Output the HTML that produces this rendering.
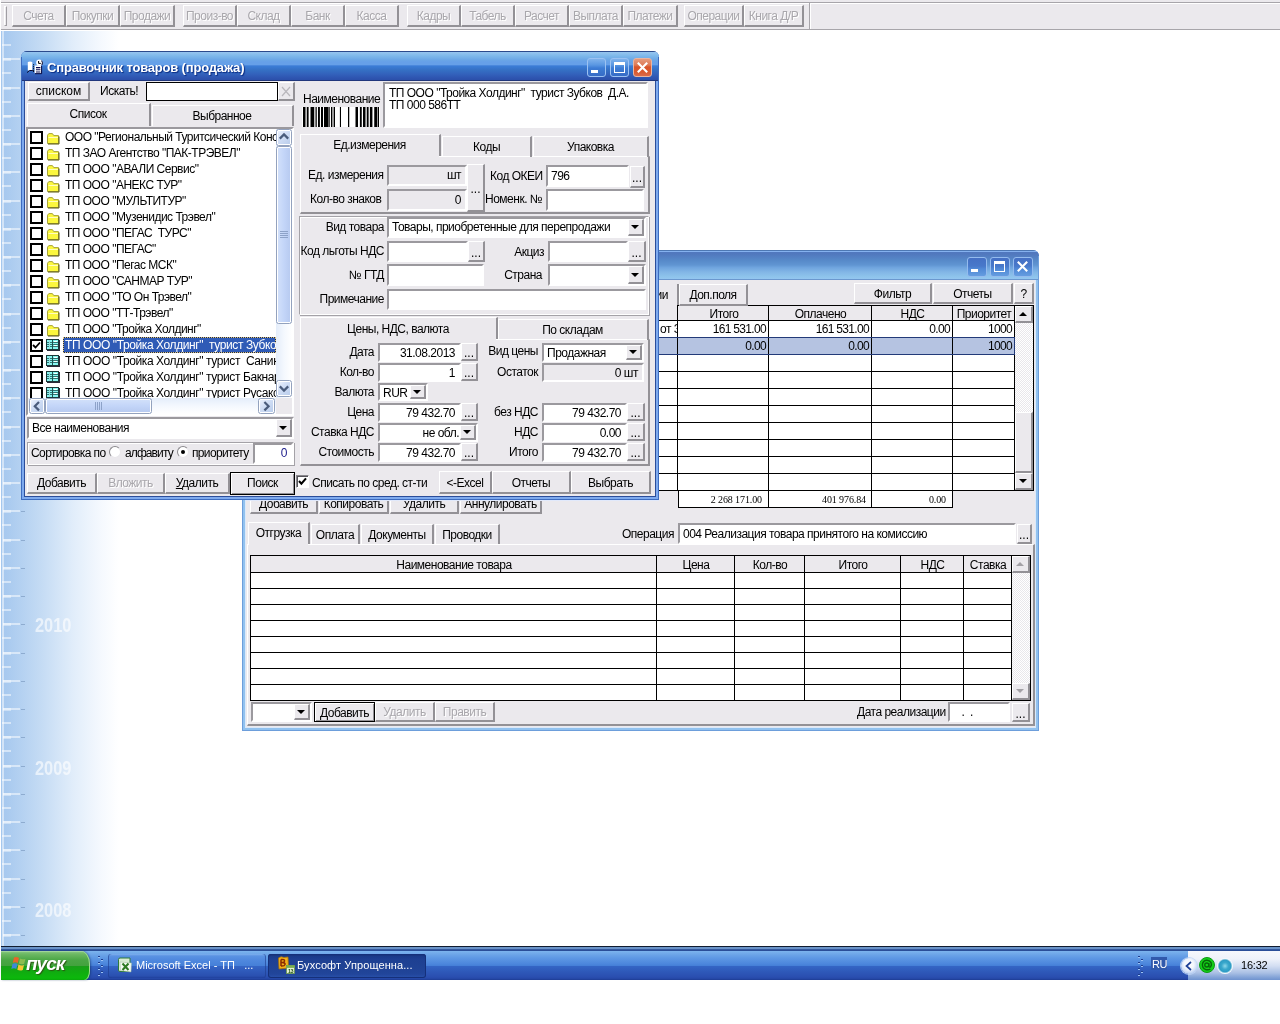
<!DOCTYPE html><html><head><meta charset="utf-8"><title>Бухсофт</title><style>
*{box-sizing:border-box;margin:0;padding:0}
html,body{width:1280px;height:1024px;overflow:hidden;background:#fff}
body{position:relative;will-change:transform;font-family:"Liberation Sans",sans-serif;font-size:12px;letter-spacing:-0.5px;color:#000;line-height:14px}
.a{position:absolute}
.t{position:absolute;white-space:pre;line-height:14px;height:14px}
.r{text-align:right}
.c{text-align:center}
.btn{position:absolute;background:#ebe9ed;border-style:solid;border-width:1px 2px 2px 1px;border-color:#fff #939196 #939196 #fff;text-align:center;white-space:pre}
.fld{position:absolute;background:#fff;border-style:solid;border-width:2px 2px 2px 2px;border-color:#9b999e #fff #fff #9b999e;white-space:pre;overflow:hidden}
.dis{background:#ebe9ed}
.grp{position:absolute;border-style:solid;border-width:1px;border-color:#a4a2a7 #fff #fff #a4a2a7;box-shadow:inset 1px 1px 0 #fff, 1px 1px 0 #a4a2a7}
.gray{color:#a9a7ac;text-shadow:1px 1px 0 #fff}
.n{letter-spacing:-0.68px}
.arrow{position:absolute;width:0;height:0;border-left:4px solid transparent;border-right:4px solid transparent;border-top:4px solid #000}
.hl{position:absolute;background:#000}
</style></head><body>
<div class="a" style="left:1px;top:31px;width:118px;height:915px;background:linear-gradient(to right,#a4c7ee 0,#a9caef 6px,#c4dbf4 40px,#e1edfa 72px,#f5f9fe 100px,#fff 118px)"></div>
<div class="a" style="left:2px;top:31px;width:2px;height:915px;background:rgba(255,255,255,.5)"></div>
<div class="a" style="left:3px;top:58px;width:8px;height:3px;background:rgba(255,255,255,.4)"></div>
<div class="a" style="left:3px;top:58px;width:17px;height:2px;background:rgba(255,255,255,.5)"></div>
<div class="a" style="left:21px;top:59px;width:4px;height:1px;background:rgba(110,140,180,.55)"></div>
<div class="a" style="left:3px;top:87px;width:8px;height:3px;background:rgba(255,255,255,.4)"></div>
<div class="a" style="left:3px;top:87px;width:17px;height:2px;background:rgba(255,255,255,.5)"></div>
<div class="a" style="left:21px;top:88px;width:4px;height:1px;background:rgba(110,140,180,.55)"></div>
<div class="a" style="left:3px;top:115px;width:8px;height:3px;background:rgba(255,255,255,.4)"></div>
<div class="a" style="left:3px;top:115px;width:17px;height:2px;background:rgba(255,255,255,.5)"></div>
<div class="a" style="left:21px;top:116px;width:4px;height:1px;background:rgba(110,140,180,.55)"></div>
<div class="a" style="left:3px;top:143px;width:8px;height:3px;background:rgba(255,255,255,.4)"></div>
<div class="a" style="left:3px;top:143px;width:17px;height:2px;background:rgba(255,255,255,.5)"></div>
<div class="a" style="left:21px;top:144px;width:4px;height:1px;background:rgba(110,140,180,.55)"></div>
<div class="a" style="left:3px;top:171px;width:8px;height:3px;background:rgba(255,255,255,.4)"></div>
<div class="a" style="left:3px;top:171px;width:17px;height:2px;background:rgba(255,255,255,.5)"></div>
<div class="a" style="left:21px;top:172px;width:4px;height:1px;background:rgba(110,140,180,.55)"></div>
<div class="a" style="left:3px;top:200px;width:8px;height:3px;background:rgba(255,255,255,.4)"></div>
<div class="a" style="left:3px;top:200px;width:17px;height:2px;background:rgba(255,255,255,.5)"></div>
<div class="a" style="left:21px;top:201px;width:4px;height:1px;background:rgba(110,140,180,.55)"></div>
<div class="a" style="left:3px;top:228px;width:8px;height:3px;background:rgba(255,255,255,.4)"></div>
<div class="a" style="left:3px;top:228px;width:17px;height:2px;background:rgba(255,255,255,.5)"></div>
<div class="a" style="left:21px;top:229px;width:4px;height:1px;background:rgba(110,140,180,.55)"></div>
<div class="a" style="left:3px;top:256px;width:8px;height:3px;background:rgba(255,255,255,.4)"></div>
<div class="a" style="left:3px;top:256px;width:17px;height:2px;background:rgba(255,255,255,.5)"></div>
<div class="a" style="left:21px;top:257px;width:4px;height:1px;background:rgba(110,140,180,.55)"></div>
<div class="a" style="left:3px;top:284px;width:8px;height:3px;background:rgba(255,255,255,.4)"></div>
<div class="a" style="left:3px;top:284px;width:17px;height:2px;background:rgba(255,255,255,.5)"></div>
<div class="a" style="left:21px;top:285px;width:4px;height:1px;background:rgba(110,140,180,.55)"></div>
<div class="a" style="left:3px;top:313px;width:8px;height:3px;background:rgba(255,255,255,.4)"></div>
<div class="a" style="left:3px;top:313px;width:17px;height:2px;background:rgba(255,255,255,.5)"></div>
<div class="a" style="left:21px;top:314px;width:4px;height:1px;background:rgba(110,140,180,.55)"></div>
<div class="a" style="left:3px;top:341px;width:8px;height:3px;background:rgba(255,255,255,.4)"></div>
<div class="a" style="left:3px;top:341px;width:17px;height:2px;background:rgba(255,255,255,.5)"></div>
<div class="a" style="left:21px;top:342px;width:4px;height:1px;background:rgba(110,140,180,.55)"></div>
<div class="a" style="left:3px;top:369px;width:8px;height:3px;background:rgba(255,255,255,.4)"></div>
<div class="a" style="left:3px;top:369px;width:17px;height:2px;background:rgba(255,255,255,.5)"></div>
<div class="a" style="left:21px;top:370px;width:4px;height:1px;background:rgba(110,140,180,.55)"></div>
<div class="a" style="left:3px;top:397px;width:8px;height:3px;background:rgba(255,255,255,.4)"></div>
<div class="a" style="left:3px;top:397px;width:17px;height:2px;background:rgba(255,255,255,.5)"></div>
<div class="a" style="left:21px;top:398px;width:4px;height:1px;background:rgba(110,140,180,.55)"></div>
<div class="a" style="left:3px;top:426px;width:8px;height:3px;background:rgba(255,255,255,.4)"></div>
<div class="a" style="left:3px;top:426px;width:17px;height:2px;background:rgba(255,255,255,.5)"></div>
<div class="a" style="left:21px;top:427px;width:4px;height:1px;background:rgba(110,140,180,.55)"></div>
<div class="a" style="left:3px;top:454px;width:8px;height:3px;background:rgba(255,255,255,.4)"></div>
<div class="a" style="left:3px;top:454px;width:17px;height:2px;background:rgba(255,255,255,.5)"></div>
<div class="a" style="left:21px;top:455px;width:4px;height:1px;background:rgba(110,140,180,.55)"></div>
<div class="a" style="left:3px;top:482px;width:8px;height:3px;background:rgba(255,255,255,.4)"></div>
<div class="a" style="left:3px;top:482px;width:17px;height:2px;background:rgba(255,255,255,.5)"></div>
<div class="a" style="left:21px;top:483px;width:4px;height:1px;background:rgba(110,140,180,.55)"></div>
<div class="a" style="left:3px;top:510px;width:8px;height:3px;background:rgba(255,255,255,.4)"></div>
<div class="a" style="left:3px;top:510px;width:17px;height:2px;background:rgba(255,255,255,.5)"></div>
<div class="a" style="left:21px;top:511px;width:4px;height:1px;background:rgba(110,140,180,.55)"></div>
<div class="a" style="left:3px;top:539px;width:8px;height:3px;background:rgba(255,255,255,.4)"></div>
<div class="a" style="left:3px;top:539px;width:17px;height:2px;background:rgba(255,255,255,.5)"></div>
<div class="a" style="left:21px;top:540px;width:4px;height:1px;background:rgba(110,140,180,.55)"></div>
<div class="a" style="left:3px;top:567px;width:8px;height:3px;background:rgba(255,255,255,.4)"></div>
<div class="a" style="left:3px;top:567px;width:17px;height:2px;background:rgba(255,255,255,.5)"></div>
<div class="a" style="left:21px;top:568px;width:4px;height:1px;background:rgba(110,140,180,.55)"></div>
<div class="a" style="left:3px;top:595px;width:8px;height:3px;background:rgba(255,255,255,.4)"></div>
<div class="a" style="left:3px;top:595px;width:17px;height:2px;background:rgba(255,255,255,.5)"></div>
<div class="a" style="left:21px;top:596px;width:4px;height:1px;background:rgba(110,140,180,.55)"></div>
<div class="a" style="left:3px;top:623px;width:8px;height:3px;background:rgba(255,255,255,.4)"></div>
<div class="a" style="left:3px;top:623px;width:17px;height:2px;background:rgba(255,255,255,.5)"></div>
<div class="a" style="left:21px;top:624px;width:4px;height:1px;background:rgba(110,140,180,.55)"></div>
<div class="a" style="left:3px;top:652px;width:8px;height:3px;background:rgba(255,255,255,.4)"></div>
<div class="a" style="left:3px;top:652px;width:17px;height:2px;background:rgba(255,255,255,.5)"></div>
<div class="a" style="left:21px;top:653px;width:4px;height:1px;background:rgba(110,140,180,.55)"></div>
<div class="a" style="left:3px;top:680px;width:8px;height:3px;background:rgba(255,255,255,.4)"></div>
<div class="a" style="left:3px;top:680px;width:17px;height:2px;background:rgba(255,255,255,.5)"></div>
<div class="a" style="left:21px;top:681px;width:4px;height:1px;background:rgba(110,140,180,.55)"></div>
<div class="a" style="left:3px;top:708px;width:8px;height:3px;background:rgba(255,255,255,.4)"></div>
<div class="a" style="left:3px;top:708px;width:17px;height:2px;background:rgba(255,255,255,.5)"></div>
<div class="a" style="left:21px;top:709px;width:4px;height:1px;background:rgba(110,140,180,.55)"></div>
<div class="a" style="left:3px;top:736px;width:8px;height:3px;background:rgba(255,255,255,.4)"></div>
<div class="a" style="left:3px;top:736px;width:17px;height:2px;background:rgba(255,255,255,.5)"></div>
<div class="a" style="left:21px;top:737px;width:4px;height:1px;background:rgba(110,140,180,.55)"></div>
<div class="a" style="left:3px;top:765px;width:8px;height:3px;background:rgba(255,255,255,.4)"></div>
<div class="a" style="left:3px;top:765px;width:17px;height:2px;background:rgba(255,255,255,.5)"></div>
<div class="a" style="left:21px;top:766px;width:4px;height:1px;background:rgba(110,140,180,.55)"></div>
<div class="a" style="left:3px;top:793px;width:8px;height:3px;background:rgba(255,255,255,.4)"></div>
<div class="a" style="left:3px;top:793px;width:17px;height:2px;background:rgba(255,255,255,.5)"></div>
<div class="a" style="left:21px;top:794px;width:4px;height:1px;background:rgba(110,140,180,.55)"></div>
<div class="a" style="left:3px;top:821px;width:8px;height:3px;background:rgba(255,255,255,.4)"></div>
<div class="a" style="left:3px;top:821px;width:17px;height:2px;background:rgba(255,255,255,.5)"></div>
<div class="a" style="left:21px;top:822px;width:4px;height:1px;background:rgba(110,140,180,.55)"></div>
<div class="a" style="left:3px;top:849px;width:8px;height:3px;background:rgba(255,255,255,.4)"></div>
<div class="a" style="left:3px;top:849px;width:17px;height:2px;background:rgba(255,255,255,.5)"></div>
<div class="a" style="left:21px;top:850px;width:4px;height:1px;background:rgba(110,140,180,.55)"></div>
<div class="a" style="left:3px;top:878px;width:8px;height:3px;background:rgba(255,255,255,.4)"></div>
<div class="a" style="left:3px;top:878px;width:17px;height:2px;background:rgba(255,255,255,.5)"></div>
<div class="a" style="left:21px;top:879px;width:4px;height:1px;background:rgba(110,140,180,.55)"></div>
<div class="a" style="left:3px;top:906px;width:8px;height:3px;background:rgba(255,255,255,.4)"></div>
<div class="a" style="left:3px;top:906px;width:17px;height:2px;background:rgba(255,255,255,.5)"></div>
<div class="a" style="left:21px;top:907px;width:4px;height:1px;background:rgba(110,140,180,.55)"></div>
<div class="a" style="left:3px;top:934px;width:8px;height:3px;background:rgba(255,255,255,.4)"></div>
<div class="a" style="left:3px;top:934px;width:17px;height:2px;background:rgba(255,255,255,.5)"></div>
<div class="a" style="left:21px;top:935px;width:4px;height:1px;background:rgba(110,140,180,.55)"></div>
<div class="a" style="left:2px;top:44px;width:9px;height:2px;background:rgba(255,255,255,.5)"></div>
<div class="a" style="left:2px;top:72px;width:9px;height:2px;background:rgba(255,255,255,.5)"></div>
<div class="a" style="left:2px;top:101px;width:9px;height:2px;background:rgba(255,255,255,.5)"></div>
<div class="a" style="left:2px;top:129px;width:9px;height:2px;background:rgba(255,255,255,.5)"></div>
<div class="a" style="left:2px;top:157px;width:9px;height:2px;background:rgba(255,255,255,.5)"></div>
<div class="a" style="left:2px;top:185px;width:9px;height:2px;background:rgba(255,255,255,.5)"></div>
<div class="a" style="left:2px;top:214px;width:9px;height:2px;background:rgba(255,255,255,.5)"></div>
<div class="a" style="left:2px;top:242px;width:9px;height:2px;background:rgba(255,255,255,.5)"></div>
<div class="a" style="left:2px;top:270px;width:9px;height:2px;background:rgba(255,255,255,.5)"></div>
<div class="a" style="left:2px;top:298px;width:9px;height:2px;background:rgba(255,255,255,.5)"></div>
<div class="a" style="left:2px;top:327px;width:9px;height:2px;background:rgba(255,255,255,.5)"></div>
<div class="a" style="left:2px;top:355px;width:9px;height:2px;background:rgba(255,255,255,.5)"></div>
<div class="a" style="left:2px;top:383px;width:9px;height:2px;background:rgba(255,255,255,.5)"></div>
<div class="a" style="left:2px;top:411px;width:9px;height:2px;background:rgba(255,255,255,.5)"></div>
<div class="a" style="left:2px;top:440px;width:9px;height:2px;background:rgba(255,255,255,.5)"></div>
<div class="a" style="left:2px;top:468px;width:9px;height:2px;background:rgba(255,255,255,.5)"></div>
<div class="a" style="left:2px;top:496px;width:9px;height:2px;background:rgba(255,255,255,.5)"></div>
<div class="a" style="left:2px;top:524px;width:9px;height:2px;background:rgba(255,255,255,.5)"></div>
<div class="a" style="left:2px;top:553px;width:9px;height:2px;background:rgba(255,255,255,.5)"></div>
<div class="a" style="left:2px;top:581px;width:9px;height:2px;background:rgba(255,255,255,.5)"></div>
<div class="a" style="left:2px;top:609px;width:9px;height:2px;background:rgba(255,255,255,.5)"></div>
<div class="a" style="left:2px;top:637px;width:9px;height:2px;background:rgba(255,255,255,.5)"></div>
<div class="a" style="left:2px;top:666px;width:9px;height:2px;background:rgba(255,255,255,.5)"></div>
<div class="a" style="left:2px;top:694px;width:9px;height:2px;background:rgba(255,255,255,.5)"></div>
<div class="a" style="left:2px;top:722px;width:9px;height:2px;background:rgba(255,255,255,.5)"></div>
<div class="a" style="left:2px;top:750px;width:9px;height:2px;background:rgba(255,255,255,.5)"></div>
<div class="a" style="left:2px;top:779px;width:9px;height:2px;background:rgba(255,255,255,.5)"></div>
<div class="a" style="left:2px;top:807px;width:9px;height:2px;background:rgba(255,255,255,.5)"></div>
<div class="a" style="left:2px;top:835px;width:9px;height:2px;background:rgba(255,255,255,.5)"></div>
<div class="a" style="left:2px;top:863px;width:9px;height:2px;background:rgba(255,255,255,.5)"></div>
<div class="a" style="left:2px;top:892px;width:9px;height:2px;background:rgba(255,255,255,.5)"></div>
<div class="a" style="left:2px;top:920px;width:9px;height:2px;background:rgba(255,255,255,.5)"></div>
<div class="a" style="left:35px;top:613px;width:48px;height:24px;line-height:24px;font-size:21px;font-weight:bold;letter-spacing:0;color:rgba(255,255,255,.62);transform:scaleX(.78);transform-origin:0 50%">2010</div>
<div class="a" style="left:35px;top:756px;width:48px;height:24px;line-height:24px;font-size:21px;font-weight:bold;letter-spacing:0;color:rgba(255,255,255,.62);transform:scaleX(.78);transform-origin:0 50%">2009</div>
<div class="a" style="left:35px;top:898px;width:48px;height:24px;line-height:24px;font-size:21px;font-weight:bold;letter-spacing:0;color:rgba(255,255,255,.62);transform:scaleX(.78);transform-origin:0 50%">2008</div>
<div class="a" style="left:1px;top:0;width:1279px;height:31px;background:#ebe9ed"></div>
<div class="a" style="left:1px;top:2px;width:1279px;height:1px;background:#a7a5aa"></div>
<div class="a" style="left:1px;top:3px;width:1279px;height:1px;background:#fff"></div>
<div class="a" style="left:1px;top:29px;width:1279px;height:1px;background:#a7a5aa"></div>
<div class="a" style="left:1px;top:30px;width:1279px;height:1px;background:#fff"></div>
<div class="a" style="left:809px;top:3px;width:1px;height:26px;background:#a7a5aa"></div>
<div class="a" style="left:810px;top:3px;width:1px;height:26px;background:#fff"></div>
<div class="a" style="left:4px;top:6px;width:3px;height:20px;border-style:solid;border-width:1px;border-color:#fff #a09ea3 #a09ea3 #fff"></div>
<div class="btn gray" style="left:12px;top:5px;width:54px;height:22px;line-height:21px">Счета</div>
<div class="btn gray" style="left:66px;top:5px;width:54px;height:22px;line-height:21px">Покупки</div>
<div class="btn gray" style="left:120px;top:5px;width:55px;height:22px;line-height:21px">Продажи</div>
<div class="btn gray" style="left:183px;top:5px;width:54px;height:22px;line-height:21px">Произ-во</div>
<div class="btn gray" style="left:237px;top:5px;width:54px;height:22px;line-height:21px">Склад</div>
<div class="btn gray" style="left:291px;top:5px;width:54px;height:22px;line-height:21px">Банк</div>
<div class="btn gray" style="left:345px;top:5px;width:54px;height:22px;line-height:21px">Касса</div>
<div class="btn gray" style="left:407px;top:5px;width:54px;height:22px;line-height:21px">Кадры</div>
<div class="btn gray" style="left:461px;top:5px;width:54px;height:22px;line-height:21px">Табель</div>
<div class="btn gray" style="left:515px;top:5px;width:54px;height:22px;line-height:21px">Расчет</div>
<div class="btn gray" style="left:569px;top:5px;width:54px;height:22px;line-height:21px">Выплата</div>
<div class="btn gray" style="left:623px;top:5px;width:55px;height:22px;line-height:21px">Платежи</div>
<div class="btn gray" style="left:684px;top:5px;width:60px;height:22px;line-height:21px">Операции</div>
<div class="btn gray" style="left:744px;top:5px;width:60px;height:22px;line-height:21px">Книга Д/Р</div>
<div class="a" style="left:242px;top:250px;width:797px;height:481px;background:#6d9edb;border-radius:6px 6px 0 0"></div>
<div class="a" style="left:243px;top:251px;width:795px;height:479px;background:#92c2ef;border-radius:5px 5px 0 0"></div>
<div class="a" style="left:245px;top:253px;width:791px;height:475px;background:#dbe9fa"></div>
<div class="a" style="left:242px;top:250px;width:797px;height:30px;background:linear-gradient(#4d78b4 0,#4d78b4 1px,#85b1ef 1px,#85b1ef 2px,#5178be 2px,#5178be 4px,#5688c8 10px,#6095d2 15px,#6fa4de 17.5px,#82b6e6 22px,#8fc5ec 27px,#94c6f1 29px,#6b98cf 29px,#6b98cf 30px);border-radius:6px 6px 0 0"></div>
<div class="a" style="left:242px;top:256px;width:1px;height:24px;background:#6d9edb"></div><div class="a" style="left:1038px;top:256px;width:1px;height:24px;background:#6d9edb"></div>
<div class="a" style="left:246px;top:280px;width:789px;height:447px;background:#ebe9ed"></div>
<div class="a" style="left:967px;top:257px;width:20px;height:20px;border:1px solid #94bbee;border-radius:3px;background:linear-gradient(#4570c4 0,#4878ca 8px,#5189d6 11px,#6aa2e2 20px)"></div>
<div class="a" style="left:971px;top:269px;width:7px;height:3px;background:#fff"></div>
<div class="a" style="left:990px;top:257px;width:20px;height:20px;border:1px solid #94bbee;border-radius:3px;background:linear-gradient(#4570c4 0,#4878ca 8px,#5189d6 11px,#6aa2e2 20px)"></div>
<div class="a" style="left:994px;top:261px;width:11px;height:11px;border:1px solid #fff;border-top-width:3px"></div>
<div class="a" style="left:1013px;top:257px;width:20px;height:20px;border:1px solid #94bbee;border-radius:3px;background:linear-gradient(#4570c4 0,#4878ca 8px,#5189d6 11px,#6aa2e2 20px)"></div>
<svg class="a" style="left:1016px;top:260px" width="13" height="13" viewBox="0 0 13 13"><path d="M1.8 1.8 L11.2 11.2 M11.2 1.8 L1.8 11.2" stroke="#fff" stroke-width="2.1" fill="none"/></svg>
<div class="btn " style="left:854px;top:283px;width:78px;height:21px;line-height:18px;line-height:20px">Фильтр</div>
<div class="btn " style="left:933px;top:283px;width:80px;height:21px;line-height:18px;line-height:20px">Отчеты</div>
<div class="btn " style="left:1014px;top:283px;width:20px;height:21px;line-height:18px;line-height:20px">?</div>
<div class="a" style="left:247px;top:305px;width:787px;height:186px;background:#fff"></div>
<div class="a" style="left:247px;top:305px;width:787px;height:16px;background:#ebe9ed"></div>
<div class="a" style="left:247px;top:338px;width:767px;height:17px;background:#b5c3e1"></div>
<div class="hl" style="left:677px;top:305px;width:357px;height:1px"></div>
<div class="hl" style="left:247px;top:320px;width:768px;height:1px"></div>
<div class="hl" style="left:247px;top:337px;width:768px;height:1px"></div>
<div class="hl" style="left:247px;top:354px;width:768px;height:1px"></div>
<div class="hl" style="left:247px;top:371px;width:768px;height:1px"></div>
<div class="hl" style="left:247px;top:388px;width:768px;height:1px"></div>
<div class="hl" style="left:247px;top:405px;width:768px;height:1px"></div>
<div class="hl" style="left:247px;top:422px;width:768px;height:1px"></div>
<div class="hl" style="left:247px;top:439px;width:768px;height:1px"></div>
<div class="hl" style="left:247px;top:456px;width:768px;height:1px"></div>
<div class="hl" style="left:247px;top:473px;width:768px;height:1px"></div>
<div class="hl" style="left:247px;top:490px;width:787px;height:1px"></div>
<div class="hl" style="left:677px;top:305px;width:1px;height:186px"></div>
<div class="hl" style="left:768px;top:305px;width:1px;height:186px"></div>
<div class="hl" style="left:871px;top:305px;width:1px;height:186px"></div>
<div class="hl" style="left:952px;top:305px;width:1px;height:186px"></div>
<div class="hl" style="left:1014px;top:305px;width:1px;height:186px"></div>
<div class="hl" style="left:1033px;top:305px;width:1px;height:186px"></div>
<div class="a" style="left:659px;top:337px;width:356px;height:18px;border:1px solid #223a78;border-left:none"></div>
<div class="hl" style="left:677px;top:338px;width:1px;height:16px"></div>
<div class="hl" style="left:768px;top:338px;width:1px;height:16px"></div>
<div class="hl" style="left:871px;top:338px;width:1px;height:16px"></div>
<div class="hl" style="left:952px;top:338px;width:1px;height:16px"></div>
<div class="t c" style="left:679px;top:307px;width:90px;">Итого</div>
<div class="t c" style="left:769px;top:307px;width:103px;">Оплачено</div>
<div class="t c" style="left:872px;top:307px;width:81px;">НДС</div>
<div class="t c" style="left:953px;top:307px;width:62px;">Приоритет</div>
<div class="a" style="left:659px;top:322px;width:18px;height:15px;overflow:hidden"><div class="t" style="left:1px;top:0">от З</div></div>
<div class="t r" style="left:566px;width:200px;top:322px;letter-spacing:-0.68px;">161 531.00</div>
<div class="t r" style="left:669px;width:200px;top:322px;letter-spacing:-0.68px;">161 531.00</div>
<div class="t r" style="left:750px;width:200px;top:322px;letter-spacing:-0.68px;">0.00</div>
<div class="t r" style="left:812px;width:200px;top:322px;letter-spacing:-0.68px;">1000</div>
<div class="t r" style="left:566px;width:200px;top:339px;letter-spacing:-0.68px;">0.00</div>
<div class="t r" style="left:669px;width:200px;top:339px;letter-spacing:-0.68px;">0.00</div>
<div class="t r" style="left:812px;width:200px;top:339px;letter-spacing:-0.68px;">1000</div>
<div class="a" style="left:678px;top:490px;width:275px;height:18px;background:#fff;border:1px solid #000"></div>
<div class="hl" style="left:768px;top:490px;width:1px;height:18px"></div>
<div class="hl" style="left:871px;top:490px;width:1px;height:18px"></div>
<div class="t r" style="left:562px;width:200px;top:493px;font-family:'Liberation Serif',serif;font-size:10px;letter-spacing:-.1px;">2 268 171.00</div>
<div class="t r" style="left:666px;width:200px;top:493px;font-family:'Liberation Serif',serif;font-size:10px;letter-spacing:-.1px;">401 976.84</div>
<div class="t r" style="left:746px;width:200px;top:493px;font-family:'Liberation Serif',serif;font-size:10px;letter-spacing:-.1px;">0.00</div>
<div class="a" style="left:1015px;top:306px;width:18px;height:184px;background:repeating-conic-gradient(#fff 0 25%,#e9e7eb 0 50%) 0 0/2px 2px"></div>
<div class="btn " style="left:1015px;top:306px;width:18px;height:17px;line-height:14px;"></div>
<div class="arrow" style="left:1019px;top:312px;border-top:none;border-bottom:4px solid #000"></div>
<div class="btn " style="left:1015px;top:473px;width:18px;height:17px;line-height:14px;"></div>
<div class="arrow" style="left:1019px;top:479px;border-top-color:#000"></div>
<div class="btn " style="left:1015px;top:412px;width:18px;height:61px;line-height:58px;"></div>
<div class="btn " style="left:679px;top:284px;width:69px;height:22px;line-height:19px;line-height:21px">Доп.поля</div>
<div class="a" style="left:677px;top:284px;width:2px;height:21px;background:#939196"></div>
<div class="t r" style="left:468px;width:200px;top:288px;">ии</div>
<div class="btn " style="left:250px;top:495px;width:68px;height:19px;line-height:16px;">Добавить</div>
<div class="btn " style="left:319px;top:495px;width:70px;height:19px;line-height:16px;">Копировать</div>
<div class="btn " style="left:390px;top:495px;width:69px;height:19px;line-height:16px;">Удалить</div>
<div class="btn " style="left:460px;top:495px;width:82px;height:19px;line-height:16px;">Аннулировать</div>
<div class="btn" style="left:247px;top:544px;width:788px;height:182px"></div>
<div class="a" style="left:248px;top:522px;width:62px;height:22px;background:#ebe9ed;border-style:solid;border-width:1px 2px 0 1px;border-color:#fff #939196 #fff #fff"></div>
<div class="a" style="left:249px;top:544px;width:59px;height:1px;background:#ebe9ed"></div>
<div class="t c" style="left:248px;top:526px;width:61px;">Отгрузка</div>
<div class="a" style="left:311px;top:524px;width:49px;height:20px;border-style:solid;border-width:1px 2px 0 1px;border-color:#fff #939196 #fff #fff"></div>
<div class="t c" style="left:311px;top:528px;width:48px;">Оплата</div>
<div class="a" style="left:361px;top:524px;width:73px;height:20px;border-style:solid;border-width:1px 2px 0 1px;border-color:#fff #939196 #fff #fff"></div>
<div class="t c" style="left:361px;top:528px;width:72px;">Документы</div>
<div class="a" style="left:435px;top:524px;width:65px;height:20px;border-style:solid;border-width:1px 2px 0 1px;border-color:#fff #939196 #fff #fff"></div>
<div class="t c" style="left:435px;top:528px;width:64px;">Проводки</div>
<div class="t" style="left:622px;top:527px;">Операция</div>
<div class="fld " style="left:678px;top:523px;width:338px;height:21px;line-height:17px;padding:0 4px 0 3px;line-height:19px;">004 Реализация товара принятого на комиссию</div>
<div class="btn " style="left:1017px;top:524px;width:15px;height:20px;line-height:17px;letter-spacing:0;padding-top:2px;overflow:hidden;">...</div>
<div class="a" style="left:250px;top:555px;width:781px;height:146px;background:#fff"></div>
<div class="a" style="left:250px;top:555px;width:781px;height:17px;background:#ebe9ed"></div>
<div class="hl" style="left:250px;top:555px;width:781px;height:1px"></div>
<div class="hl" style="left:250px;top:572px;width:762px;height:1px"></div>
<div class="hl" style="left:250px;top:588px;width:762px;height:1px"></div>
<div class="hl" style="left:250px;top:604px;width:762px;height:1px"></div>
<div class="hl" style="left:250px;top:620px;width:762px;height:1px"></div>
<div class="hl" style="left:250px;top:636px;width:762px;height:1px"></div>
<div class="hl" style="left:250px;top:652px;width:762px;height:1px"></div>
<div class="hl" style="left:250px;top:668px;width:762px;height:1px"></div>
<div class="hl" style="left:250px;top:684px;width:762px;height:1px"></div>
<div class="hl" style="left:250px;top:700px;width:781px;height:1px"></div>
<div class="hl" style="left:250px;top:555px;width:1px;height:146px"></div>
<div class="hl" style="left:656px;top:555px;width:1px;height:146px"></div>
<div class="hl" style="left:734px;top:555px;width:1px;height:146px"></div>
<div class="hl" style="left:804px;top:555px;width:1px;height:146px"></div>
<div class="hl" style="left:900px;top:555px;width:1px;height:146px"></div>
<div class="hl" style="left:963px;top:555px;width:1px;height:146px"></div>
<div class="hl" style="left:1011px;top:555px;width:1px;height:146px"></div>
<div class="hl" style="left:1030px;top:555px;width:1px;height:146px"></div>
<div class="t c" style="left:251px;top:558px;width:406px;">Наименование товара</div>
<div class="t c" style="left:657px;top:558px;width:78px;">Цена</div>
<div class="t c" style="left:735px;top:558px;width:70px;">Кол-во</div>
<div class="t c" style="left:805px;top:558px;width:96px;">Итого</div>
<div class="t c" style="left:901px;top:558px;width:63px;">НДС</div>
<div class="t c" style="left:964px;top:558px;width:48px;">Ставка</div>
<div class="a" style="left:1012px;top:556px;width:18px;height:144px;background:repeating-conic-gradient(#fff 0 25%,#e9e7eb 0 50%) 0 0/2px 2px"></div>
<div class="btn " style="left:1012px;top:556px;width:18px;height:17px;line-height:14px;"></div>
<div class="arrow" style="left:1016px;top:562px;border-top:none;border-bottom:4px solid #a3a1a6"></div>
<div class="btn " style="left:1012px;top:683px;width:18px;height:17px;line-height:14px;"></div>
<div class="arrow" style="left:1016px;top:689px;border-top-color:#a3a1a6"></div>
<div class="fld " style="left:251px;top:702px;width:61px;height:20px;line-height:16px;padding:0 4px 0 3px;"></div>
<div class="btn" style="left:294px;top:704px;width:16px;height:16px"></div>
<div class="arrow" style="left:297px;top:710px"></div>
<div class="btn " style="left:314px;top:702px;width:61px;height:20px;line-height:17px;border:1px solid #000;box-shadow:inset 1px 1px 0 #fff,inset -1px -1px 0 #939196;line-height:20px">Добавить</div>
<div class="btn gray" style="left:375px;top:702px;width:60px;height:20px;line-height:17px;line-height:19px">Удалить</div>
<div class="btn gray" style="left:435px;top:702px;width:60px;height:20px;line-height:17px;line-height:19px">Править</div>
<div class="t" style="left:857px;top:705px;">Дата реализации</div>
<div class="fld " style="left:948px;top:702px;width:62px;height:20px;line-height:16px;padding:0 4px 0 3px;">   .  .</div>
<div class="btn " style="left:1012px;top:703px;width:18px;height:19px;line-height:16px;letter-spacing:0;padding-top:2px;overflow:hidden;">...</div>
<div class="a" style="left:246px;top:500px;width:413px;height:1px;background:#e1e9fb"></div>
<div class="a" style="left:21px;top:51px;width:638px;height:449px;background:#3d6cc0;border-radius:6px 6px 0 0"></div>
<div class="a" style="left:22px;top:52px;width:636px;height:447px;background:#7eaaee;border-radius:5px 5px 0 0"></div>
<div class="a" style="left:24px;top:54px;width:632px;height:443px;background:#2b4d9a"></div>
<div class="a" style="left:21px;top:51px;width:638px;height:30px;background:linear-gradient(#2b4b8c 0,#2b4b8c 1px,#97c5ef 1px,#7db8ea 5px,#6aa6e6 9px,#66a0e8 11px,#66a0e8 13.5px,#4a88dc 14.5px,#3a7bd4 15.5px,#3570c4 19px,#3362bc 23px,#2e54b0 27px,#2b50aa 29px,#21377c 29px,#21377c 30px);border-radius:6px 6px 0 0"></div>
<div class="a" style="left:21px;top:57px;width:1px;height:24px;background:#3d6cc0"></div><div class="a" style="left:658px;top:57px;width:1px;height:24px;background:#3d6cc0"></div>
<div class="a" style="left:25px;top:81px;width:630px;height:415px;background:#ebe9ed"></div>
<div class="a" style="left:587px;top:58px;width:19px;height:19px;border:1px solid #9cc2f2;border-radius:3px;background:linear-gradient(#7fb2ec 0,#5a97e2 6px,#3d7dd6 9px,#3a74cc 13px,#3467c4 19px)"></div>
<div class="a" style="left:591px;top:70px;width:7px;height:3px;background:#fff"></div>
<div class="a" style="left:610px;top:58px;width:19px;height:19px;border:1px solid #9cc2f2;border-radius:3px;background:linear-gradient(#7fb2ec 0,#5a97e2 6px,#3d7dd6 9px,#3a74cc 13px,#3467c4 19px)"></div>
<div class="a" style="left:614px;top:62px;width:11px;height:11px;border:1px solid #fff;border-top-width:3px"></div>
<div class="a" style="left:633px;top:58px;width:19px;height:19px;border:1px solid #eab4a0;border-radius:3px;background:linear-gradient(#e59a7c 0,#de7b58 6px,#d9542a 8px,#db5a30 13px,#d97258 19px)"></div>
<svg class="a" style="left:636px;top:61px" width="13" height="13" viewBox="0 0 13 13"><path d="M1.8 1.8 L11.2 11.2 M11.2 1.8 L1.8 11.2" stroke="#fff" stroke-width="2.1" fill="none"/></svg>
<svg class="a" style="left:27px;top:59px" width="17" height="16" viewBox="0 0 17 16"><path d="M.8 2.9 Q3 2.2 5.3 2.9 V11.4 H.8z" fill="#fff"/><path d="M0 13.6 L2.6 11.5 H5.6 L7 13" stroke="#0a0a30" stroke-width="1" fill="none"/><path d="M6.6 5.2v1M6.6 7.2v1M6.6 9.2v1M6.6 11.2v1" stroke="#000" stroke-width="1"/><rect x="7.6" y="6.4" width="6.6" height="7.8" fill="#fff"/><path d="M14.6 6.6V14.7H8" stroke="#0a0a40" stroke-width="1" fill="none"/><path d="M9 8.6h4.4M9 10.8h4.4M9 13h4.4" stroke="#0a0a50" stroke-width="1.1"/><circle cx="12.3" cy="3.7" r="3.1" fill="#fff"/><path d="M14.6 1.6 Q16.2 3.8 14.9 6" stroke="#0a0a30" stroke-width="1" fill="none"/><path d="M11.6 2v2.4h2.2" stroke="#000" stroke-width="1" fill="none"/></svg>
<div class="t" style="left:47px;top:59px;height:18px;line-height:18px;font-size:13px;font-weight:bold;letter-spacing:-0.18px;color:#fff;text-shadow:1px 1px 1px #0a2a80">Справочник товаров (продажа)</div>
<div class="btn " style="left:28px;top:82px;width:62px;height:19px;line-height:16px;letter-spacing:0">списком</div>
<div class="t" style="left:100px;top:84px;">Искать!</div>
<div class="a" style="left:146px;top:82px;width:132px;height:19px;background:#fff;border:1px solid #000"></div>
<div class="btn " style="left:278px;top:82px;width:17px;height:19px;line-height:16px;"></div>
<svg class="a" style="left:281px;top:86px" width="10" height="11" viewBox="0 0 10 11"><path d="M1 1 L9 10 M9 1 L1 10" stroke="#b9b7bc" stroke-width="1.2" fill="none"/></svg>
<div class="a" style="left:27px;top:103px;width:124px;height:23px;background:#ebe9ed;border-style:solid;border-width:1px 2px 0 1px;border-color:#fff #939196 #fff #fff"></div>
<div class="t c" style="left:27px;top:107px;width:122px;">Список</div>
<div class="a" style="left:152px;top:105px;width:142px;height:21px;border-style:solid;border-width:1px 2px 0 1px;border-color:#fff #939196 #fff #fff"></div>
<div class="t c" style="left:152px;top:109px;width:140px;">Выбранное</div>
<div class="a" style="left:26px;top:127px;width:268px;height:289px;background:#fff;border-style:solid;border-width:2px;border-color:#9b999e #fff #fff #9b999e"></div>
<div class="a" style="left:28px;top:129px;width:248px;height:269px;overflow:hidden">
<div class="a" style="left:2px;top:2px;width:13px;height:13px;border:2px solid #000;background:#fff"></div>
<svg class="a" style="left:19px;top:4px" width="13" height="12" viewBox="0 0 13 12"><path d="M.5 10.5V2.2L1.8 .6h3.6l1.4 2H11.5v7.9z" fill="#fbf73e" stroke="#a8a43a" stroke-width="1"/><path d="M1.5 4.5h9.5" stroke="#fffcc0" stroke-width="1"/><path d="M12 3.5V11H1" stroke="#5c5a14" stroke-width="1" fill="none"/></svg>
<div class="t" style="left:37px;top:1px;">ООО "Региональный Туритсический Конс</div>
<div class="a" style="left:2px;top:18px;width:13px;height:13px;border:2px solid #000;background:#fff"></div>
<svg class="a" style="left:19px;top:20px" width="13" height="12" viewBox="0 0 13 12"><path d="M.5 10.5V2.2L1.8 .6h3.6l1.4 2H11.5v7.9z" fill="#fbf73e" stroke="#a8a43a" stroke-width="1"/><path d="M1.5 4.5h9.5" stroke="#fffcc0" stroke-width="1"/><path d="M12 3.5V11H1" stroke="#5c5a14" stroke-width="1" fill="none"/></svg>
<div class="t" style="left:37px;top:17px;">ТП ЗАО Агентство "ПАК-ТРЭВЕЛ"</div>
<div class="a" style="left:2px;top:34px;width:13px;height:13px;border:2px solid #000;background:#fff"></div>
<svg class="a" style="left:19px;top:36px" width="13" height="12" viewBox="0 0 13 12"><path d="M.5 10.5V2.2L1.8 .6h3.6l1.4 2H11.5v7.9z" fill="#fbf73e" stroke="#a8a43a" stroke-width="1"/><path d="M1.5 4.5h9.5" stroke="#fffcc0" stroke-width="1"/><path d="M12 3.5V11H1" stroke="#5c5a14" stroke-width="1" fill="none"/></svg>
<div class="t" style="left:37px;top:33px;">ТП ООО "АВАЛИ Сервис"</div>
<div class="a" style="left:2px;top:50px;width:13px;height:13px;border:2px solid #000;background:#fff"></div>
<svg class="a" style="left:19px;top:52px" width="13" height="12" viewBox="0 0 13 12"><path d="M.5 10.5V2.2L1.8 .6h3.6l1.4 2H11.5v7.9z" fill="#fbf73e" stroke="#a8a43a" stroke-width="1"/><path d="M1.5 4.5h9.5" stroke="#fffcc0" stroke-width="1"/><path d="M12 3.5V11H1" stroke="#5c5a14" stroke-width="1" fill="none"/></svg>
<div class="t" style="left:37px;top:49px;">ТП ООО "АНЕКС ТУР"</div>
<div class="a" style="left:2px;top:66px;width:13px;height:13px;border:2px solid #000;background:#fff"></div>
<svg class="a" style="left:19px;top:68px" width="13" height="12" viewBox="0 0 13 12"><path d="M.5 10.5V2.2L1.8 .6h3.6l1.4 2H11.5v7.9z" fill="#fbf73e" stroke="#a8a43a" stroke-width="1"/><path d="M1.5 4.5h9.5" stroke="#fffcc0" stroke-width="1"/><path d="M12 3.5V11H1" stroke="#5c5a14" stroke-width="1" fill="none"/></svg>
<div class="t" style="left:37px;top:65px;">ТП ООО "МУЛЬТИТУР"</div>
<div class="a" style="left:2px;top:82px;width:13px;height:13px;border:2px solid #000;background:#fff"></div>
<svg class="a" style="left:19px;top:84px" width="13" height="12" viewBox="0 0 13 12"><path d="M.5 10.5V2.2L1.8 .6h3.6l1.4 2H11.5v7.9z" fill="#fbf73e" stroke="#a8a43a" stroke-width="1"/><path d="M1.5 4.5h9.5" stroke="#fffcc0" stroke-width="1"/><path d="M12 3.5V11H1" stroke="#5c5a14" stroke-width="1" fill="none"/></svg>
<div class="t" style="left:37px;top:81px;">ТП ООО "Музенидис Трэвел"</div>
<div class="a" style="left:2px;top:98px;width:13px;height:13px;border:2px solid #000;background:#fff"></div>
<svg class="a" style="left:19px;top:100px" width="13" height="12" viewBox="0 0 13 12"><path d="M.5 10.5V2.2L1.8 .6h3.6l1.4 2H11.5v7.9z" fill="#fbf73e" stroke="#a8a43a" stroke-width="1"/><path d="M1.5 4.5h9.5" stroke="#fffcc0" stroke-width="1"/><path d="M12 3.5V11H1" stroke="#5c5a14" stroke-width="1" fill="none"/></svg>
<div class="t" style="left:37px;top:97px;">ТП ООО "ПЕГАС  ТУРС"</div>
<div class="a" style="left:2px;top:114px;width:13px;height:13px;border:2px solid #000;background:#fff"></div>
<svg class="a" style="left:19px;top:116px" width="13" height="12" viewBox="0 0 13 12"><path d="M.5 10.5V2.2L1.8 .6h3.6l1.4 2H11.5v7.9z" fill="#fbf73e" stroke="#a8a43a" stroke-width="1"/><path d="M1.5 4.5h9.5" stroke="#fffcc0" stroke-width="1"/><path d="M12 3.5V11H1" stroke="#5c5a14" stroke-width="1" fill="none"/></svg>
<div class="t" style="left:37px;top:113px;">ТП ООО "ПЕГАС"</div>
<div class="a" style="left:2px;top:130px;width:13px;height:13px;border:2px solid #000;background:#fff"></div>
<svg class="a" style="left:19px;top:132px" width="13" height="12" viewBox="0 0 13 12"><path d="M.5 10.5V2.2L1.8 .6h3.6l1.4 2H11.5v7.9z" fill="#fbf73e" stroke="#a8a43a" stroke-width="1"/><path d="M1.5 4.5h9.5" stroke="#fffcc0" stroke-width="1"/><path d="M12 3.5V11H1" stroke="#5c5a14" stroke-width="1" fill="none"/></svg>
<div class="t" style="left:37px;top:129px;">ТП ООО "Пегас МСК"</div>
<div class="a" style="left:2px;top:146px;width:13px;height:13px;border:2px solid #000;background:#fff"></div>
<svg class="a" style="left:19px;top:148px" width="13" height="12" viewBox="0 0 13 12"><path d="M.5 10.5V2.2L1.8 .6h3.6l1.4 2H11.5v7.9z" fill="#fbf73e" stroke="#a8a43a" stroke-width="1"/><path d="M1.5 4.5h9.5" stroke="#fffcc0" stroke-width="1"/><path d="M12 3.5V11H1" stroke="#5c5a14" stroke-width="1" fill="none"/></svg>
<div class="t" style="left:37px;top:145px;">ТП ООО "САНМАР ТУР"</div>
<div class="a" style="left:2px;top:162px;width:13px;height:13px;border:2px solid #000;background:#fff"></div>
<svg class="a" style="left:19px;top:164px" width="13" height="12" viewBox="0 0 13 12"><path d="M.5 10.5V2.2L1.8 .6h3.6l1.4 2H11.5v7.9z" fill="#fbf73e" stroke="#a8a43a" stroke-width="1"/><path d="M1.5 4.5h9.5" stroke="#fffcc0" stroke-width="1"/><path d="M12 3.5V11H1" stroke="#5c5a14" stroke-width="1" fill="none"/></svg>
<div class="t" style="left:37px;top:161px;">ТП ООО "ТО Он Трэвел"</div>
<div class="a" style="left:2px;top:178px;width:13px;height:13px;border:2px solid #000;background:#fff"></div>
<svg class="a" style="left:19px;top:180px" width="13" height="12" viewBox="0 0 13 12"><path d="M.5 10.5V2.2L1.8 .6h3.6l1.4 2H11.5v7.9z" fill="#fbf73e" stroke="#a8a43a" stroke-width="1"/><path d="M1.5 4.5h9.5" stroke="#fffcc0" stroke-width="1"/><path d="M12 3.5V11H1" stroke="#5c5a14" stroke-width="1" fill="none"/></svg>
<div class="t" style="left:37px;top:177px;">ТП ООО "ТТ-Трэвел"</div>
<div class="a" style="left:2px;top:194px;width:13px;height:13px;border:2px solid #000;background:#fff"></div>
<svg class="a" style="left:19px;top:196px" width="13" height="12" viewBox="0 0 13 12"><path d="M.5 10.5V2.2L1.8 .6h3.6l1.4 2H11.5v7.9z" fill="#fbf73e" stroke="#a8a43a" stroke-width="1"/><path d="M1.5 4.5h9.5" stroke="#fffcc0" stroke-width="1"/><path d="M12 3.5V11H1" stroke="#5c5a14" stroke-width="1" fill="none"/></svg>
<div class="t" style="left:37px;top:193px;">ТП ООО "Тройка Холдинг"</div>
<div class="a" style="left:2px;top:210px;width:13px;height:13px;border:2px solid #000;background:#fff"></div>
<svg class="a" style="left:4px;top:212px" width="9" height="9" viewBox="0 0 9 9"><path d="M1 4 L3.5 6.5 L8 1.5" stroke="#000" stroke-width="1.8" fill="none"/></svg>
<svg class="a" style="left:18px;top:210px" width="14" height="12" viewBox="0 0 14 12" shape-rendering="crispEdges"><rect x="0" y="0" width="13" height="11" fill="#1a3a3a"/><rect x="1" y="1" width="11" height="9" fill="#86f6f2"/><rect x="1" y="3" width="11" height="1" fill="#2f7472"/><rect x="1" y="5" width="11" height="1" fill="#2f7472"/><rect x="1" y="7" width="11" height="1" fill="#2f7472"/><rect x="6" y="1" width="1" height="9" fill="#1f5250"/><rect x="3" y="1" width="1" height="9" fill="#9adfdc"/><rect x="8" y="2" width="3" height="1" fill="#fff"/><rect x="8" y="6" width="3" height="1" fill="#fff"/><rect x="13" y="1" width="1" height="11" fill="#2a2a3a"/><rect x="1" y="11" width="13" height="1" fill="#2a2a3a"/></svg>
<div class="a" style="left:35px;top:208px;width:213px;height:16px;background:#2f5bb6;box-shadow:inset 0 0 0 1px #1b2a55;outline:1px dotted #d9c27e;outline-offset:-1px"></div>
<div class="t" style="left:37px;top:209px;color:#fff;letter-spacing:-.4px">ТП ООО "Тройка Холдинг"  турист Зубков</div>
<div class="a" style="left:2px;top:226px;width:13px;height:13px;border:2px solid #000;background:#fff"></div>
<svg class="a" style="left:18px;top:226px" width="14" height="12" viewBox="0 0 14 12" shape-rendering="crispEdges"><rect x="0" y="0" width="13" height="11" fill="#1a3a3a"/><rect x="1" y="1" width="11" height="9" fill="#86f6f2"/><rect x="1" y="3" width="11" height="1" fill="#2f7472"/><rect x="1" y="5" width="11" height="1" fill="#2f7472"/><rect x="1" y="7" width="11" height="1" fill="#2f7472"/><rect x="6" y="1" width="1" height="9" fill="#1f5250"/><rect x="3" y="1" width="1" height="9" fill="#9adfdc"/><rect x="8" y="2" width="3" height="1" fill="#fff"/><rect x="8" y="6" width="3" height="1" fill="#fff"/><rect x="13" y="1" width="1" height="11" fill="#2a2a3a"/><rect x="1" y="11" width="13" height="1" fill="#2a2a3a"/></svg>
<div class="t" style="left:37px;top:225px;letter-spacing:-.4px">ТП ООО "Тройка Холдинг" турист  Санин</div>
<div class="a" style="left:2px;top:242px;width:13px;height:13px;border:2px solid #000;background:#fff"></div>
<svg class="a" style="left:18px;top:242px" width="14" height="12" viewBox="0 0 14 12" shape-rendering="crispEdges"><rect x="0" y="0" width="13" height="11" fill="#1a3a3a"/><rect x="1" y="1" width="11" height="9" fill="#86f6f2"/><rect x="1" y="3" width="11" height="1" fill="#2f7472"/><rect x="1" y="5" width="11" height="1" fill="#2f7472"/><rect x="1" y="7" width="11" height="1" fill="#2f7472"/><rect x="6" y="1" width="1" height="9" fill="#1f5250"/><rect x="3" y="1" width="1" height="9" fill="#9adfdc"/><rect x="8" y="2" width="3" height="1" fill="#fff"/><rect x="8" y="6" width="3" height="1" fill="#fff"/><rect x="13" y="1" width="1" height="11" fill="#2a2a3a"/><rect x="1" y="11" width="13" height="1" fill="#2a2a3a"/></svg>
<div class="t" style="left:37px;top:241px;letter-spacing:-.4px">ТП ООО "Тройка Холдинг" турист Бакнар</div>
<div class="a" style="left:2px;top:258px;width:13px;height:13px;border:2px solid #000;background:#fff"></div>
<svg class="a" style="left:18px;top:258px" width="14" height="12" viewBox="0 0 14 12" shape-rendering="crispEdges"><rect x="0" y="0" width="13" height="11" fill="#1a3a3a"/><rect x="1" y="1" width="11" height="9" fill="#86f6f2"/><rect x="1" y="3" width="11" height="1" fill="#2f7472"/><rect x="1" y="5" width="11" height="1" fill="#2f7472"/><rect x="1" y="7" width="11" height="1" fill="#2f7472"/><rect x="6" y="1" width="1" height="9" fill="#1f5250"/><rect x="3" y="1" width="1" height="9" fill="#9adfdc"/><rect x="8" y="2" width="3" height="1" fill="#fff"/><rect x="8" y="6" width="3" height="1" fill="#fff"/><rect x="13" y="1" width="1" height="11" fill="#2a2a3a"/><rect x="1" y="11" width="13" height="1" fill="#2a2a3a"/></svg>
<div class="t" style="left:37px;top:257px;letter-spacing:-.4px">ТП ООО "Тройка Холдинг" турист Русако</div>
</div>
<div class="a" style="left:276px;top:129px;width:16px;height:269px;background:linear-gradient(to right,#e4edfa,#f4f8fe 50%,#fff)"></div>
<div class="a" style="left:276px;top:129px;width:16px;height:17px;border:1px solid #93a2be;border-radius:2.5px;background:linear-gradient(135deg,#f2f6fe 0,#d2dff6 40%,#b7cbea 100%);box-shadow:inset 0 0 0 1px #fff"></div>
<svg class="a" style="left:276px;top:129px" width="17" height="17" viewBox="0 0 17 17"><path d="M3.8 9.6 L8 5.4 L12.2 9.6" stroke="#4a5c7c" stroke-width="2.2" fill="none"/></svg>
<div class="a" style="left:276px;top:380px;width:16px;height:17px;border:1px solid #93a2be;border-radius:2.5px;background:linear-gradient(135deg,#f2f6fe 0,#d2dff6 40%,#b7cbea 100%);box-shadow:inset 0 0 0 1px #fff"></div>
<svg class="a" style="left:276px;top:380px" width="17" height="17" viewBox="0 0 17 17"><path d="M3.8 6.4 L8 10.6 L12.2 6.4" stroke="#4a5c7c" stroke-width="2.2" fill="none"/></svg>
<div class="a" style="left:276px;top:146px;width:16px;height:178px;border:1px solid #93a2be;border-radius:2.5px;background:linear-gradient(to right,#d3e1fa,#c3d5f8 50%,#b6c9ef);box-shadow:inset 0 0 0 1px #fff"></div>
<div class="a" style="left:280px;top:231px;width:8px;height:1px;background:#8da2c8"></div>
<div class="a" style="left:280px;top:233px;width:8px;height:1px;background:#8da2c8"></div>
<div class="a" style="left:280px;top:235px;width:8px;height:1px;background:#8da2c8"></div>
<div class="a" style="left:280px;top:237px;width:8px;height:1px;background:#8da2c8"></div>
<div class="a" style="left:28px;top:398px;width:248px;height:16px;background:linear-gradient(#e4edfa,#f4f8fe 50%,#fff)"></div>
<div class="a" style="left:29px;top:398px;width:16px;height:16px;border:1px solid #93a2be;border-radius:2.5px;background:linear-gradient(135deg,#f2f6fe 0,#d2dff6 40%,#b7cbea 100%);box-shadow:inset 0 0 0 1px #fff"></div>
<svg class="a" style="left:29px;top:398px" width="17" height="17" viewBox="0 0 17 17"><path d="M10 4 L5.8 8.2 L10 12.4" stroke="#4a5c7c" stroke-width="2.2" fill="none"/></svg>
<div class="a" style="left:258px;top:398px;width:17px;height:16px;border:1px solid #93a2be;border-radius:2.5px;background:linear-gradient(135deg,#f2f6fe 0,#d2dff6 40%,#b7cbea 100%);box-shadow:inset 0 0 0 1px #fff"></div>
<svg class="a" style="left:258px;top:398px" width="17" height="17" viewBox="0 0 17 17"><path d="M6.4 4 L10.6 8.2 L6.4 12.4" stroke="#4a5c7c" stroke-width="2.2" fill="none"/></svg>
<div class="a" style="left:45px;top:398px;width:107px;height:16px;border:1px solid #93a2be;border-radius:2.5px;background:linear-gradient(#d3e1fa,#c3d5f8 50%,#b6c9ef);box-shadow:inset 0 0 0 1px #fff"></div>
<div class="a" style="left:95px;top:402px;width:1px;height:8px;background:#8da2c8"></div>
<div class="a" style="left:97px;top:402px;width:1px;height:8px;background:#8da2c8"></div>
<div class="a" style="left:99px;top:402px;width:1px;height:8px;background:#8da2c8"></div>
<div class="a" style="left:101px;top:402px;width:1px;height:8px;background:#8da2c8"></div>
<div class="a" style="left:276px;top:398px;width:16px;height:16px;background:#ebe9ed"></div>
<div class="fld " style="left:27px;top:417px;width:267px;height:22px;line-height:18px;padding:0 4px 0 3px;">Все наименования</div>
<div class="btn" style="left:276px;top:419px;width:16px;height:18px"></div>
<div class="arrow" style="left:279px;top:426px"></div>
<div class="grp" style="left:27px;top:442px;width:267px;height:23px"></div>
<div class="t" style="left:31px;top:446px;letter-spacing:-.6px;">Сортировка по</div>
<div class="a" style="left:109px;top:446px;width:12px;height:12px;border-radius:6px;background:#fff;border:1px solid;border-color:#8a888d #e8e6ea #e8e6ea #8a888d"></div>
<div class="t" style="left:125px;top:446px;letter-spacing:-.9px;">алфавиту</div>
<div class="a" style="left:177px;top:446px;width:12px;height:12px;border-radius:6px;background:#fff;border:1px solid;border-color:#8a888d #e8e6ea #e8e6ea #8a888d"></div>
<div class="a" style="left:181px;top:450px;width:4px;height:4px;border-radius:2px;background:#000"></div>
<div class="t" style="left:192px;top:446px;letter-spacing:-.65px;">приоритету</div>
<div class="fld " style="left:253px;top:443px;width:40px;height:21px;line-height:17px;padding:0 4px 0 3px;text-align:right;color:#1a1a8a;">0</div>
<div class="btn " style="left:27px;top:473px;width:70px;height:21px;line-height:18px;">Добавить</div>
<div class="btn gray" style="left:97px;top:473px;width:68px;height:21px;line-height:18px;">Вложить</div>
<div class="btn " style="left:165px;top:473px;width:65px;height:21px;line-height:18px;"><u>У</u>далить</div>
<div class="btn " style="left:230px;top:472px;width:65px;height:23px;line-height:20px;border:1px solid #000;box-shadow:inset 1px 1px 0 #fff,inset -1px -1px 0 #939196;line-height:20px">Поиск</div>
<div class="t" style="left:303px;top:92px;">Наименование</div>
<svg class="a" style="left:302px;top:107px;background:#fff" width="78" height="20" viewBox="-1 0 78 20"><rect x="0" y="0" width="2.50" height="20" fill="#000"/><rect x="3.75" y="0" width="1.85" height="20" fill="#000"/><rect x="7.5" y="0" width="3.75" height="20" fill="#000"/><rect x="12.5" y="0" width="1.25" height="20" fill="#000"/><rect x="15" y="0" width="1.90" height="20" fill="#000"/><rect x="18" y="0" width="2.00" height="20" fill="#000"/><rect x="21" y="0" width="4.60" height="20" fill="#000"/><rect x="26.3" y="0" width="0.70" height="20" fill="#000"/><rect x="28" y="0" width="1.40" height="20" fill="#000"/><rect x="30.6" y="0" width="1.40" height="20" fill="#000"/><rect x="36.9" y="0" width="1.10" height="20" fill="#000"/><rect x="45" y="0" width="1.25" height="20" fill="#000"/><rect x="52.5" y="0" width="2.50" height="20" fill="#000"/><rect x="56.9" y="0" width="1.85" height="20" fill="#000"/><rect x="60" y="0" width="2.50" height="20" fill="#000"/><rect x="63.75" y="0" width="1.85" height="20" fill="#000"/><rect x="66.9" y="0" width="2.50" height="20" fill="#000"/><rect x="71.25" y="0" width="3.15" height="20" fill="#000"/><rect x="75" y="0" width="1.00" height="20" fill="#000"/></svg>
<div class="fld" style="left:383px;top:82px;width:265px;height:46px;line-height:12px;padding:3px 4px">ТП ООО "Тройка Холдинг"  турист Зубков  Д.А.
ТП 000 586ТТ</div>
<div class="btn" style="left:300px;top:156px;width:350px;height:58px"></div>
<div class="a" style="left:300px;top:134px;width:141px;height:22px;background:#ebe9ed;border-style:solid;border-width:1px 2px 0 1px;border-color:#fff #939196 #fff #fff"></div>
<div class="a" style="left:301px;top:156px;width:138px;height:1px;background:#ebe9ed"></div>
<div class="t c" style="left:300px;top:138px;width:139px;">Ед.измерения</div>
<div class="a" style="left:442px;top:136px;width:90px;height:21px;border-style:solid;border-width:1px 2px 0 1px;border-color:#fff #939196 #fff #fff"></div>
<div class="t c" style="left:442px;top:140px;width:89px;">Коды</div>
<div class="a" style="left:533px;top:136px;width:116px;height:21px;border-style:solid;border-width:1px 2px 0 1px;border-color:#fff #939196 #fff #fff"></div>
<div class="t c" style="left:533px;top:140px;width:115px;">Упаковка</div>
<div class="t" style="left:308px;top:168px;">Ед. измерения</div>
<div class="fld dis" style="left:387px;top:165px;width:80px;height:21px;line-height:17px;padding:0 4px 0 3px;text-align:right;">шт</div>
<div class="t" style="left:310px;top:192px;">Кол-во знаков</div>
<div class="fld dis" style="left:387px;top:189px;width:80px;height:22px;line-height:18px;padding:0 4px 0 3px;text-align:right;">0</div>
<div class="btn " style="left:467px;top:164px;width:18px;height:48px;line-height:45px;letter-spacing:0;line-height:49px">...</div>
<div class="t" style="left:490px;top:169px;">Код ОКЕИ</div>
<div class="fld " style="left:546px;top:165px;width:83px;height:22px;line-height:18px;padding:0 4px 0 3px;">796</div>
<div class="btn " style="left:630px;top:166px;width:15px;height:22px;line-height:19px;letter-spacing:0;padding-top:2px;overflow:hidden;">...</div>
<div class="t" style="left:485px;top:192px;">Номенк. №</div>
<div class="fld " style="left:546px;top:189px;width:98px;height:22px;line-height:18px;padding:0 4px 0 3px;"></div>
<div class="grp" style="left:299px;top:216px;width:350px;height:99px"></div>
<div class="t r" style="left:184px;width:200px;top:220px;">Вид товара</div>
<div class="fld " style="left:387px;top:217px;width:259px;height:21px;line-height:17px;padding:0 4px 0 3px;">Товары, приобретенные для перепродажи</div>
<div class="btn" style="left:628px;top:219px;width:16px;height:17px"></div>
<div class="arrow" style="left:631px;top:225px"></div>
<div class="t r" style="left:184px;width:200px;top:244px;">Код льготы НДС</div>
<div class="fld " style="left:387px;top:241px;width:81px;height:21px;line-height:17px;padding:0 4px 0 3px;"></div>
<div class="btn " style="left:468px;top:241px;width:17px;height:21px;line-height:18px;letter-spacing:0;padding-top:2px;overflow:hidden;">...</div>
<div class="t r" style="left:344px;width:200px;top:245px;">Акциз</div>
<div class="fld " style="left:548px;top:241px;width:80px;height:21px;line-height:17px;padding:0 4px 0 3px;"></div>
<div class="btn " style="left:628px;top:241px;width:18px;height:21px;line-height:18px;letter-spacing:0;padding-top:2px;overflow:hidden;">...</div>
<div class="t r" style="left:184px;width:200px;top:268px;">№ ГТД</div>
<div class="fld " style="left:387px;top:264px;width:97px;height:22px;line-height:18px;padding:0 4px 0 3px;"></div>
<div class="t r" style="left:342px;width:200px;top:268px;">Страна</div>
<div class="fld " style="left:548px;top:264px;width:98px;height:22px;line-height:18px;padding:0 4px 0 3px;"></div>
<div class="btn" style="left:628px;top:266px;width:16px;height:18px"></div>
<div class="arrow" style="left:631px;top:273px"></div>
<div class="t r" style="left:184px;width:200px;top:292px;">Примечание</div>
<div class="fld " style="left:387px;top:289px;width:259px;height:21px;line-height:17px;padding:0 4px 0 3px;"></div>
<div class="btn" style="left:300px;top:339px;width:350px;height:127px"></div>
<div class="a" style="left:300px;top:317px;width:198px;height:22px;background:#ebe9ed;border-style:solid;border-width:1px 2px 0 1px;border-color:#fff #939196 #fff #fff"></div>
<div class="a" style="left:301px;top:339px;width:195px;height:1px;background:#ebe9ed"></div>
<div class="t c" style="left:300px;top:322px;width:196px;">Цены, НДС, валюта</div>
<div class="a" style="left:498px;top:319px;width:151px;height:21px;border-style:solid;border-width:1px 2px 0 1px;border-color:#fff #939196 #fff #fff"></div>
<div class="t c" style="left:498px;top:323px;width:149px;">По складам</div>
<div class="t r" style="left:174px;width:200px;top:345px;">Дата</div>
<div class="fld " style="left:378px;top:343px;width:83px;height:19px;line-height:17px;padding:0 4px 0 3px;text-align:right;">31.08.2013</div>
<div class="btn " style="left:461px;top:343px;width:17px;height:18px;line-height:15px;letter-spacing:0;padding-top:2px;overflow:hidden;">...</div>
<div class="t r" style="left:338px;width:200px;top:344px;">Вид цены</div>
<div class="fld " style="left:542px;top:343px;width:102px;height:19px;line-height:17px;padding:0 4px 0 3px;">Продажная</div>
<div class="btn" style="left:626px;top:345px;width:16px;height:15px"></div>
<div class="arrow" style="left:629px;top:350px"></div>
<div class="t r" style="left:174px;width:200px;top:365px;">Кол-во</div>
<div class="fld " style="left:378px;top:363px;width:83px;height:19px;line-height:17px;padding:0 4px 0 3px;text-align:right;">1</div>
<div class="btn " style="left:461px;top:363px;width:17px;height:18px;line-height:15px;letter-spacing:0;padding-top:2px;overflow:hidden;">...</div>
<div class="t r" style="left:338px;width:200px;top:365px;">Остаток</div>
<div class="fld dis" style="left:542px;top:363px;width:102px;height:19px;line-height:17px;padding:0 4px 0 3px;text-align:right;">0 шт</div>
<div class="t r" style="left:174px;width:200px;top:385px;">Валюта</div>
<div class="fld " style="left:378px;top:383px;width:50px;height:18px;line-height:16px;padding:0 4px 0 3px;">RUR</div>
<div class="btn" style="left:410px;top:385px;width:16px;height:14px"></div>
<div class="arrow" style="left:413px;top:390px"></div>
<div class="t r" style="left:174px;width:200px;top:405px;">Цена</div>
<div class="fld " style="left:378px;top:403px;width:83px;height:19px;line-height:17px;padding:0 4px 0 3px;text-align:right;">79 432.70</div>
<div class="btn " style="left:461px;top:403px;width:17px;height:18px;line-height:15px;letter-spacing:0;padding-top:2px;overflow:hidden;">...</div>
<div class="t r" style="left:338px;width:200px;top:405px;">без НДС</div>
<div class="fld " style="left:542px;top:403px;width:85px;height:19px;line-height:17px;padding:0 4px 0 3px;text-align:right;">79 432.70</div>
<div class="btn " style="left:627px;top:403px;width:18px;height:18px;line-height:15px;letter-spacing:0;padding-top:2px;overflow:hidden;">...</div>
<div class="t r" style="left:174px;width:200px;top:425px;">Ставка НДС</div>
<div class="fld " style="left:378px;top:423px;width:100px;height:19px;line-height:17px;padding:0 4px 0 3px;text-align:right;padding-right:17px;">не обл.</div>
<div class="btn" style="left:460px;top:425px;width:16px;height:15px"></div>
<div class="arrow" style="left:463px;top:430px"></div>
<div class="t r" style="left:338px;width:200px;top:425px;">НДС</div>
<div class="fld " style="left:542px;top:423px;width:85px;height:19px;line-height:17px;padding:0 4px 0 3px;text-align:right;">0.00</div>
<div class="btn " style="left:627px;top:423px;width:18px;height:18px;line-height:15px;letter-spacing:0;padding-top:2px;overflow:hidden;">...</div>
<div class="t r" style="left:174px;width:200px;top:445px;">Стоимость</div>
<div class="fld " style="left:378px;top:443px;width:83px;height:19px;line-height:17px;padding:0 4px 0 3px;text-align:right;">79 432.70</div>
<div class="btn " style="left:461px;top:443px;width:17px;height:18px;line-height:15px;letter-spacing:0;padding-top:2px;overflow:hidden;">...</div>
<div class="t r" style="left:338px;width:200px;top:445px;">Итого</div>
<div class="fld " style="left:542px;top:443px;width:85px;height:19px;line-height:17px;padding:0 4px 0 3px;text-align:right;">79 432.70</div>
<div class="btn " style="left:627px;top:443px;width:18px;height:18px;line-height:15px;letter-spacing:0;padding-top:2px;overflow:hidden;">...</div>
<div class="a" style="left:296px;top:475px;width:13px;height:13px;background:#fff;border-style:solid;border-width:1px;border-color:#8a888d #fff #fff #8a888d;box-shadow:inset 1px 1px 0 #55545a"></div>
<svg class="a" style="left:298px;top:477px" width="9" height="9" viewBox="0 0 9 9"><path d="M1 4 L3.4 6.6 L8 1.4" stroke="#000" stroke-width="2.1" fill="none"/></svg>
<div class="t" style="left:312px;top:476px;">Списать по сред. ст-ти</div>
<div class="btn " style="left:439px;top:471px;width:53px;height:23px;line-height:20px;line-height:22px">&lt;-Excel</div>
<div class="btn " style="left:492px;top:471px;width:79px;height:23px;line-height:20px;line-height:22px">Отчеты</div>
<div class="btn " style="left:571px;top:471px;width:80px;height:23px;line-height:20px;line-height:22px">Выбрать</div>
<div class="a" style="left:1px;top:946px;width:1279px;height:34px;background:linear-gradient(#101c30 0,#101c30 1px,#6a93c8 1px,#6a93c8 3px,#3f66a8 3px,#2a4e98 4px,#2a4e98 5px,#7cb4ee 5px,#6aa3e8 9px,#5e98e4 12px,#4c86dc 18px,#4680d8 19.5px,#3464c4 20.5px,#2e58b8 26px,#2a4eb0 31px,#2446a4 33px,#1d3a90 34px)"></div>
<div class="a" style="left:1px;top:951px;width:89px;height:29px;border-radius:0 9px 5px 0/0 13px 9px 0;background:linear-gradient(#b4dcae 0,#7cc274 1.5px,#6db864 3px,#4aa645 9px,#43a23e 14.5px,#18a018 15.5px,#10ac10 21px,#0cb80c 27px,#0aa80a 29px);box-shadow:inset -1px 0 0 #9fdc90, 1px 0 2px rgba(10,40,90,.5)"></div>
<svg class="a" style="left:11px;top:956px" width="16" height="17" viewBox="0 0 16 17"><path d="M3 1.5 Q5.5 .3 8 2 L6.8 7 Q4.5 5.5 1.8 6.8z" fill="#e8642a"/><path d="M9 2.5 Q11.5 4 14.5 2.8 L13.2 7.8 Q10.5 9 7.8 7.5z" fill="#8cbc50"/><path d="M1.5 8 Q4 6.5 6.5 8 L5.3 13 Q3 11.5 .3 13z" fill="#3c8ad8"/><path d="M7.5 8.6 Q10 10.2 13 9 L11.8 14 Q9 15.3 6.3 13.8z" fill="#f6c634"/></svg>
<div class="t" style="left:26px;top:953px;height:22px;line-height:22px;font-size:19px;font-weight:bold;font-style:italic;letter-spacing:-1px;color:#fff;text-shadow:1px 1px 1px #2a5a12">пуск</div>
<div class="a" style="left:98px;top:956px;width:2px;height:1px;background:#1c3c8c"></div><div class="a" style="left:98px;top:957px;width:2px;height:1px;background:#9cc2f4"></div>
<div class="a" style="left:101px;top:959px;width:2px;height:1px;background:#1c3c8c"></div><div class="a" style="left:101px;top:960px;width:2px;height:1px;background:#9cc2f4"></div>
<div class="a" style="left:98px;top:962px;width:2px;height:1px;background:#1c3c8c"></div><div class="a" style="left:98px;top:963px;width:2px;height:1px;background:#9cc2f4"></div>
<div class="a" style="left:101px;top:965px;width:2px;height:1px;background:#1c3c8c"></div><div class="a" style="left:101px;top:966px;width:2px;height:1px;background:#9cc2f4"></div>
<div class="a" style="left:98px;top:968px;width:2px;height:1px;background:#1c3c8c"></div><div class="a" style="left:98px;top:969px;width:2px;height:1px;background:#9cc2f4"></div>
<div class="a" style="left:101px;top:971px;width:2px;height:1px;background:#1c3c8c"></div><div class="a" style="left:101px;top:972px;width:2px;height:1px;background:#9cc2f4"></div>
<div class="a" style="left:98px;top:974px;width:2px;height:1px;background:#1c3c8c"></div><div class="a" style="left:98px;top:975px;width:2px;height:1px;background:#9cc2f4"></div>
<div class="a" style="left:1138px;top:956px;width:2px;height:1px;background:#1c3c8c"></div><div class="a" style="left:1138px;top:957px;width:2px;height:1px;background:#9cc2f4"></div>
<div class="a" style="left:1141px;top:959px;width:2px;height:1px;background:#1c3c8c"></div><div class="a" style="left:1141px;top:960px;width:2px;height:1px;background:#9cc2f4"></div>
<div class="a" style="left:1138px;top:962px;width:2px;height:1px;background:#1c3c8c"></div><div class="a" style="left:1138px;top:963px;width:2px;height:1px;background:#9cc2f4"></div>
<div class="a" style="left:1141px;top:965px;width:2px;height:1px;background:#1c3c8c"></div><div class="a" style="left:1141px;top:966px;width:2px;height:1px;background:#9cc2f4"></div>
<div class="a" style="left:1138px;top:968px;width:2px;height:1px;background:#1c3c8c"></div><div class="a" style="left:1138px;top:969px;width:2px;height:1px;background:#9cc2f4"></div>
<div class="a" style="left:1141px;top:971px;width:2px;height:1px;background:#1c3c8c"></div><div class="a" style="left:1141px;top:972px;width:2px;height:1px;background:#9cc2f4"></div>
<div class="a" style="left:1138px;top:974px;width:2px;height:1px;background:#1c3c8c"></div><div class="a" style="left:1138px;top:975px;width:2px;height:1px;background:#9cc2f4"></div>
<div class="a" style="left:108px;top:954px;width:158px;height:24px;border-radius:3px;background:linear-gradient(#7fb0ee 0,#5a92e2 2px,#4f88de 6px,#4680d8 11.5px,#3464c4 12.5px,#2e58b8 18px,#2a50b0 22px,#20409c 24px);box-shadow:inset 1px 0 0 rgba(30,60,140,.6),inset -1px 0 0 rgba(30,60,140,.6)"></div>
<svg class="a" style="left:117px;top:957px" width="15" height="16" viewBox="0 0 15 16"><path d="M1.5 2.5 Q1.5 1 3 1 H13 V11 L12 14.5 H3 Q1.5 14.5 1.5 13z" fill="#d8ecd2" stroke="#2f7a3c" stroke-width="1"/><path d="M3 5 L14.5 6 L14 15 L3.5 13.5z" fill="#f4faf2" stroke="#9ab89a" stroke-width=".5"/><path d="M5.5 6.5 L11.5 13 M11.5 6.5 L5.5 13" stroke="#2e7a22" stroke-width="2"/></svg>
<div class="t" style="left:136px;top:958px;font-size:11px;letter-spacing:0;color:#fff;">Microsoft Excel - ТП   ...</div>
<div class="a" style="left:268px;top:954px;width:158px;height:24px;border-radius:3px;background:linear-gradient(#132a66 0,#1a3a88 2px,#1e4092 6px,#1f4294 12px,#21459a 20px,#2a52ac 24px);box-shadow:inset 0 0 0 1px #15307a"></div>
<svg class="a" style="left:277px;top:956px" width="18" height="18" viewBox="0 0 18 18"><path d="M1.5 2 Q4 0 7 1.5 L11 1 L11.5 12 L2 13z" fill="#f2b21a" stroke="#a8700a" stroke-width=".8"/><path d="M4 3.5 V10 M4 3.5 Q8 3 7.5 5.2 Q7 6.6 4.5 6.6 Q8.6 6.4 8 8.6 Q7.5 10.2 4 10" stroke="#8a2a00" stroke-width="1.5" fill="none"/><rect x="9.5" y="9.5" width="8" height="8" fill="#e6f2d4" stroke="#6a9a4a" stroke-width=".8"/><rect x="9.5" y="9.5" width="8" height="2.4" fill="#7ab050"/><text x="13.5" y="16.6" font-family="Liberation Sans" font-size="5.5" font-weight="bold" text-anchor="middle" fill="#2a5a1a">13</text></svg>
<div class="t" style="left:297px;top:958px;font-size:11px;letter-spacing:0;color:#fff;letter-spacing:.1px">Бухсофт Упрощенна...</div>
<div class="a" style="left:1188px;top:951px;width:92px;height:29px;background:linear-gradient(#f6f8fc 0,#eef2fa 8px,#d3def2 15px,#a9bfe4 22px,#86a5d8 26px,#6f93cf 29px)"></div>
<div class="a" style="left:1151px;top:957px;width:16px;height:13px;background:#3159ac"></div>
<div class="t" style="left:1152px;top:957px;font-size:11px;letter-spacing:0;color:#fff;letter-spacing:-.4px">RU</div>
<div class="a" style="left:1181px;top:958px;width:16px;height:16px;border-radius:8px;background:radial-gradient(circle at 50% 40%,#fff 0,#f2f6fd 40%,#b9cff2 75%,#86aae4 100%);box-shadow:0 0 0 1px rgba(190,212,245,.9)"></div>
<svg class="a" style="left:1181px;top:958px" width="16" height="16" viewBox="0 0 16 16"><path d="M10 4 L5.5 8 L10 12" stroke="#1d3f96" stroke-width="1.7" fill="none"/></svg>
<div class="a" style="left:1199px;top:957px;width:16px;height:16px;border-radius:8px;background:#14d018;border:1px solid #0c9a14"></div>
<svg class="a" style="left:1199px;top:957px" width="16" height="16" viewBox="0 0 16 16"><circle cx="7.8" cy="8" r="2" fill="none" stroke="#06660a" stroke-width="1.4"/><path d="M9.8 6 V9.2 Q10.2 10.6 11.6 9.8 Q13 8 12 5.6 Q10.5 3 7.6 3.2 Q4 3.6 3.4 7.4 Q3.2 11.4 6.8 12.6 Q9.4 13.2 11.4 12" fill="none" stroke="#06660a" stroke-width="1.4"/></svg>
<div class="a" style="left:1217px;top:958px;width:16px;height:16px;border-radius:8px;background:radial-gradient(circle at 50% 50%,#8fd8ea 0,#3aa8cc 30%,#2e9cc4 52%,#f4f8fc 66%,#fff 100%)"></div>
<div class="t" style="left:1241px;top:958px;font-size:11px;letter-spacing:-.2px;color:#000">16:32</div>
</body></html>
